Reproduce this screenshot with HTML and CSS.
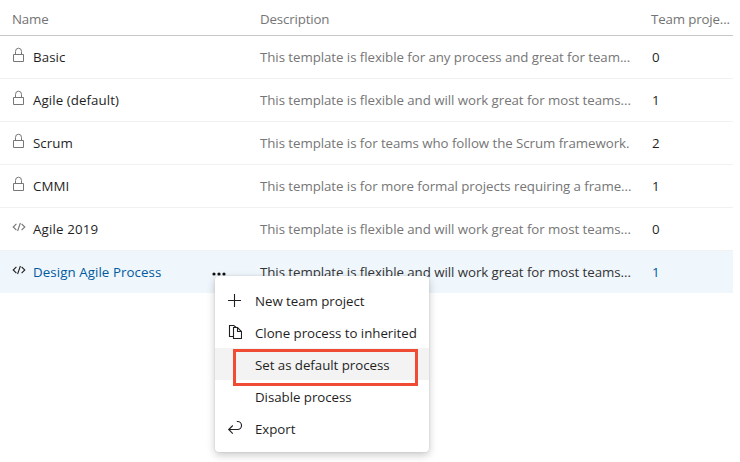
FILE: index.html
```html
<!DOCTYPE html>
<html lang="en">
<head>
<meta charset="utf-8">
<title>Processes</title>
<link rel="stylesheet" href="styles.css">
</head>
<body>
<svg class="defs" aria-hidden="true">
  <symbol id="lock" viewBox="0 0 14 16"><path d="M1.500 7.500h10v7h-10zM3.500 7.500V4.500a3 3.300 0 0 1 6 0v3" fill="none" stroke="currentColor"/></symbol>
  <symbol id="code" viewBox="0 0 14 10"><path d="M4.400 1.800 1.200 5l3.200 3.200M9.600 1.800 12.800 5 9.600 8.200M8.400 1 5.600 9" fill="none" stroke="currentColor" stroke-width="1.100"/></symbol>
</svg>
<main class="table">
  <div class="row head"><span class="name">Name</span><span class="desc">Description</span><span class="count">Team proje...</span></div>
  <div class="row"><span class="name"><svg class="lock"><use href="#lock"/></svg><span>Basic</span></span><span class="desc">This template is flexible for any process and great for team...</span><span class="count">0</span></div>
  <div class="row"><span class="name"><svg class="lock"><use href="#lock"/></svg><span>Agile (default)</span></span><span class="desc">This template is flexible and will work great for most teams...</span><span class="count">1</span></div>
  <div class="row"><span class="name"><svg class="lock"><use href="#lock"/></svg><span>Scrum</span></span><span class="desc">This template is for teams who follow the Scrum framework.</span><span class="count">2</span></div>
  <div class="row"><span class="name"><svg class="lock"><use href="#lock"/></svg><span>CMMI</span></span><span class="desc">This template is for more formal projects requiring a frame...</span><span class="count">1</span></div>
  <div class="row"><span class="name"><svg class="code"><use href="#code"/></svg><span class="wide">Agile 2019</span></span><span class="desc">This template is flexible and will work great for most teams...</span><span class="count">0</span></div>
  <div class="row selected"><span class="name"><svg class="code"><use href="#code"/></svg><span>Design Agile Process</span><svg class="more" viewBox="0 0 14 4"><circle cx="2" cy="2" r="1.600"/><circle cx="7" cy="2" r="1.600"/><circle cx="12" cy="2" r="1.600"/></svg></span><span class="desc">This template is flexible and will work great for most teams...</span><span class="count">1</span></div>
</main>
<div class="menu">
  <div class="item"><svg viewBox="0 0 16 16"><path d="M8.500 2v13M2 8.500h13"/></svg><span>New team project</span></div>
  <div class="item"><svg viewBox="0 0 16 16"><path d="M7 12.500H3.500v-11h4.300l2.500 2M7.500 3.500h4l4 4v7h-8zM11.500 3.500v4h4"/></svg><span>Clone process to inherited</span></div>
  <div class="item active"><span>Set as default process</span></div>
  <div class="item"><span>Disable process</span></div>
  <div class="item"><svg viewBox="0 0 16 16"><path d="M6.800 5.500 2.700 9.500l4.100 4.200M2.700 9.500H11.500a4 4 0 0 0 0-8h-.7"/></svg><span>Export</span></div>
</div>
<div class="marker"></div>
</body>
</html>
```
FILE: styles.css
```css
body { margin: 0; background: #fff; color: #1f1f1f; font: 13.3px/20px "Open Sans", "Noto Sans", sans-serif; overflow: hidden; }
.defs { position: absolute; width: 0; height: 0; }
.table { width: 733px; }
.row { display: grid; grid-template-columns: 248px 391px 1fr; align-items: center; box-sizing: border-box; height: 43px; padding-left: 12px; border-bottom: 1px solid #f1f1f1; white-space: nowrap; letter-spacing: -0.06px; }
.head { height: 36px; padding-top: 3px; border-bottom-color: #c8c8c8; color: #737373; letter-spacing: -0.15px; }
.name { display: flex; align-items: center; }
.name span { letter-spacing: 0.08px; }
.name .wide { letter-spacing: 0.15px; }
.row .count { padding-left: 1px; }
.head .count { padding-left: 0; }
.desc { color: #767676; }
.selected { background: #eff6fc; border-bottom-color: #fff; background-clip: padding-box; color: #005a9e; }
.selected .desc { color: #333; }
.lock { width: 14px; height: 16px; margin: -4px 7px 0 0; color: #777; }
.code { width: 14px; height: 10px; margin: -4px 7px 0 0; color: #767676; }
.selected .code { color: #222; }
.more { width: 14px; height: 4px; margin: 3px 34px 0 auto; fill: #111; }
.menu { position: absolute; left: 215px; top: 276px; width: 214px; box-sizing: border-box; padding: 8px 0; background: #fff; border-radius: 4px; box-shadow: 0 3px 8px rgba(0,0,0,.22), 0 0 2px rgba(0,0,0,.12); letter-spacing: -0.04px; }
.item { display: grid; grid-template-columns: 29px 1fr; align-items: center; height: 32px; padding: 0 12px 0 11px; white-space: nowrap; }
.item span { grid-column: 2; padding-top: 2px; }
.item svg { width: 16px; height: 16px; fill: none; stroke: #1f1f1f; stroke-width: 1.1; }
.active { background: #f3f3f3; }
.marker { position: absolute; left: 233px; top: 349px; width: 179px; height: 31px; border: 3px solid #f04b35; }
```
